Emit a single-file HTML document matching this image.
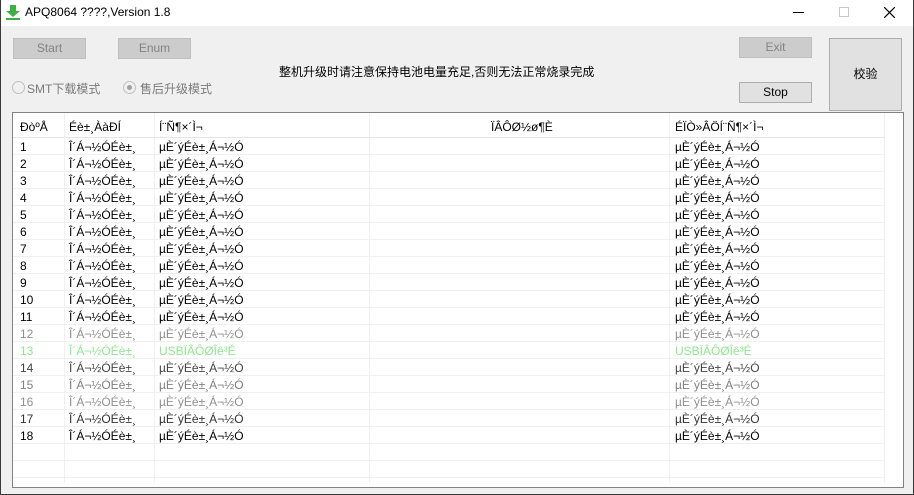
<!DOCTYPE html>
<html><head><meta charset="utf-8"><style>
*{margin:0;padding:0;box-sizing:border-box}
body{width:914px;height:495px;background:#f0f0f0;font-family:"Liberation Sans","Noto Sans CJK SC",sans-serif;font-size:12px;position:relative;overflow:hidden;color:#000}
.frame{position:absolute;left:0;top:0;width:914px;height:495px;border:1px solid #3a3a3a;border-top:none}
.title{position:absolute;left:0;top:0;width:914px;height:26px;background:#fff}
.btn{position:absolute;background:#e1e1e1;border:1px solid #adadad;text-align:center;font-size:12px}
.dis{background:#cccccc;border-color:#bfbfbf;color:#838383}
.abs{position:absolute;white-space:nowrap}
.list{position:absolute;left:12px;top:112px;width:892px;height:376px;background:#fff;border:1px solid #828282}
.row{position:absolute;left:0;width:872px;height:17px;border-bottom:1px solid #f0f0f0}
.row span{position:absolute;top:2px;white-space:nowrap}
.vl{position:absolute;top:0;width:1px;height:370px;background:#f0f0f0}
</style></head><body>
<div class="title">
 <svg class="abs" style="left:6px;top:5px" width="14" height="15" viewBox="0 0 14 15"><path d="M4 0h6v6h4l-7 6-7-6h4z" fill="#3cb043"/><rect x="0" y="13" width="14" height="2" fill="#3cb043"/></svg>
 <div class="abs" style="left:25px;top:5px;font-size:12px">APQ8064 ????,Version 1.8</div>
 <div class="abs" style="left:793px;top:12px;width:11px;height:1px;background:#000"></div>
 <div class="abs" style="left:839px;top:7px;width:10px;height:10px;border:1px solid #c8c8c8"></div>
 <svg class="abs" style="left:884px;top:7px" width="11" height="11"><path d="M0 0L11 11M11 0L0 11" stroke="#000" stroke-width="1.2"/></svg>
</div>
<div class="btn dis" style="left:13px;top:38px;width:73px;height:21px;line-height:19px">Start</div>
<div class="btn dis" style="left:118px;top:38px;width:73px;height:21px;line-height:19px">Enum</div>
<div class="btn dis" style="left:739px;top:37px;width:73px;height:21px;line-height:19px">Exit</div>
<div class="btn" style="left:739px;top:82px;width:73px;height:21px;line-height:19px">Stop</div>
<div class="btn" style="left:829px;top:38px;width:73px;height:73px;line-height:71px">校验</div>
<div class="abs" style="left:279px;top:63px">整机升级时请注意保持电池电量充足,否则无法正常烧录完成</div>
<div class="abs" style="left:12px;top:81px;width:13px;height:13px;border:1px solid #c0c0c0;border-radius:50%;background:#f0f0f0"></div>
<div class="abs" style="left:27px;top:80px;color:#7a7a7a">SMT下载模式</div>
<div class="abs" style="left:123px;top:81px;width:13px;height:13px;border:1px solid #c0c0c0;border-radius:50%"></div>
<div class="abs" style="left:127px;top:85px;width:5px;height:5px;border-radius:50%;background:#a0a0a0"></div>
<div class="abs" style="left:140px;top:80px;color:#7a7a7a">售后升级模式</div>
<div class="list">
 <div class="vl" style="left:51px"></div><div class="vl" style="left:141px"></div><div class="vl" style="left:356px"></div><div class="vl" style="left:656px"></div><div class="vl" style="left:871px"></div>
 <div class="row" style="top:0;height:25px;border-bottom:1px solid #e5e5e5"><span style="left:7px;top:7px">ÐòºÅ</span><span style="left:56px;top:7px">Éè±¸ÀàÐÍ</span><span style="left:146px;top:7px">Í¨Ñ¶×´Ì¬</span><span style="left:478px;top:7px">ÏÂÔØ½ø¶È</span><span style="left:662px;top:7px">ÉÏÒ»ÂÖÍ¨Ñ¶×´Ì¬</span></div>
 <div id="rows"></div>
</div>
<script>
var c=['#000','#000','#000','#000','#000','#000','#000','#000','#000','#000','#000','#909090','#8ee88e','#444','#808080','#909090','#333','#000'];
var h='';
for(var i=0;i<18;i++){var t=25+i*17;var g=i==12;
h+='<div class="row" style="top:'+t+'px;color:'+c[i]+'"><span style="left:7px">'+(i+1)+'</span><span style="left:56px">Î´Á¬½ÓÉè±¸</span><span style="left:146px">'+(g?'USBÏÂÔØÎê³É':'µÈ´ýÉè±¸Á¬½Ó')+'</span><span style="left:662px">'+(g?'USBÏÂÔØÎê³É':'µÈ´ýÉè±¸Á¬½Ó')+'</span></div>';}
for(var i=18;i<20;i++){h+='<div class="row" style="top:'+(25+i*17)+'px"></div>';}
document.getElementById('rows').innerHTML=h;
</script>
</div>
<div class="frame"></div>
</body></html>
